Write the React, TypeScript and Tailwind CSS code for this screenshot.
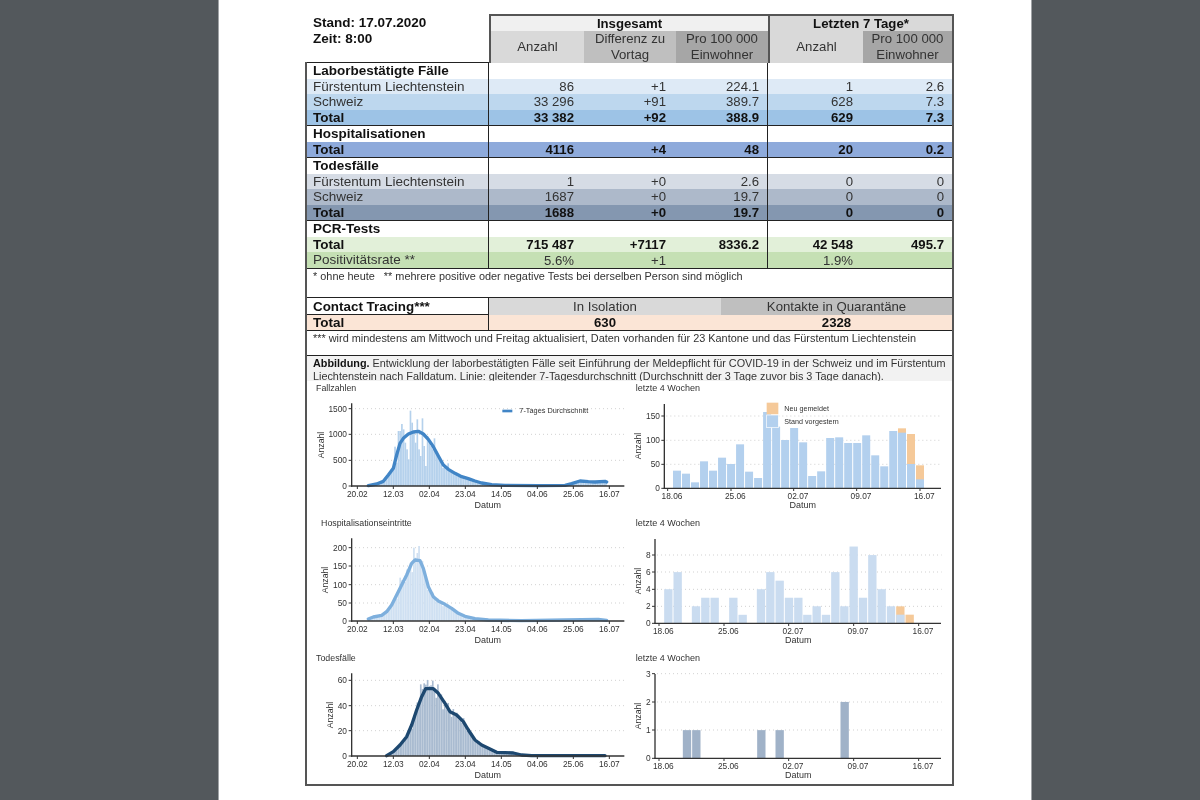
import type { ReactNode } from 'react';

const cols = 'grid grid-cols-[182px_93px_92px_94px_93px_91px]';

interface RowData {
  label: string;
  values: string[];
  bg: string;
  bold?: boolean;
}

const Row = ({ label, values, bg, bold }: RowData) => (
  <div className={`${cols} flex-1 items-center leading-none ${bg} ${bold ? 'font-bold text-[#111]' : 'text-[#333]'}`}>
    <div className="h-full flex items-center pl-[6px] text-[13.5px] border-r border-[#222]">{label}</div>
    {values.map((v, i) => (
      <div key={i} className={`h-full flex items-center justify-end pr-2 ${i === 2 ? 'border-r border-[#222]' : ''}`}>
        {v}
      </div>
    ))}
  </div>
);

const Heading = ({ label }: { label: string }) => (
  <div className={`${cols} flex-1 items-center leading-none font-bold text-[#111]`}>
    <div className="h-full flex items-center pl-[6px] text-[13.5px] border-r border-[#222]">{label}</div>
    <div />
    <div />
    <div className="h-full border-r border-[#222]" />
  </div>
);

const Group = ({ height, children }: { height: string; children: ReactNode }) => (
  <div className={`flex flex-col ${height} border-b border-[#222]`}>{children}</div>
);

type Pt = [number, number];

const interp = (line: Pt[], x: number) => {
  if (x < line[0][0] || x > line[line.length - 1][0]) return 0;
  for (let i = 1; i < line.length; i++) {
    if (x <= line[i][0]) {
      const [x0, y0] = line[i - 1];
      const [x1, y1] = line[i];
      return y0 + ((y1 - y0) * (x - x0)) / (x1 - x0);
    }
  }
  return 0;
};

const noise = [1.02, 0.9, 1.1, 0.96, 1.06, 0.84, 1.04, 0.93, 1.12];

interface HistProps {
  title: string;
  titleX: number;
  yLabelX: number;
  ticks: [string, number][];
  line: Pt[];
  peaks: Record<number, number>;
  bar: string;
  stroke: string;
  children?: ReactNode;
}

const histTicks = ['20.02', '12.03', '02.04', '23.04', '14.05', '04.06', '25.06', '16.07'];

const HistChart = ({ title, titleX, yLabelX, ticks, line, peaks, bar, stroke, children }: HistProps) => {
  const days = Array.from({ length: 147 }, (_, d) => d);
  return (
    <svg width={323} height={135} viewBox="6 3 969 405" className="block">
      <text x={titleX} y={33} fontSize={26.5} fill="#333">{title}</text>
      {ticks.map(([t, y]) => (
        <g key={t}>
          {t !== '0' && <line x1={150} x2={958} y1={y} y2={y} stroke="#c8c8c8" strokeWidth={2.5} strokeDasharray="3 9" />}
          <line x1={131} x2={140} y1={y} y2={y} stroke="#333" strokeWidth={3} />
          <text x={126} y={y + 9} fontSize={25} textAnchor="end" fill="#333">{t}</text>
        </g>
      ))}
      {days.map((d) => {
        const x = 157 + (108 / 21) * d;
        const base = 318 - interp(line, x);
        const h = peaks[d] ?? (line[0][0] <= x && x <= line[line.length - 1][0] ? base * noise[d % noise.length] : 0);
        return h > 0 ? <rect key={d} x={x - 2.5} y={318 - h} width={5} height={h} fill={bar} /> : null;
      })}
      <polyline points={line.map((p) => p.join(',')).join(' ')} fill="none" stroke={stroke} strokeWidth={10} strokeLinejoin="round" strokeLinecap="round" />
      <line x1={140} x2={140} y1={70} y2={320} stroke="#333" strokeWidth={4} />
      <line x1={138} x2={958} y1={318} y2={318} stroke="#333" strokeWidth={4} />
      {histTicks.map((t, i) => (
        <g key={t}>
          <line x1={157 + 108 * i} x2={157 + 108 * i} y1={318} y2={327} stroke="#333" strokeWidth={3} />
          <text x={157 + 108 * i} y={352} fontSize={25} textAnchor="middle" fill="#333">{t}</text>
        </g>
      ))}
      <text x={548} y={385} fontSize={27} textAnchor="middle" fill="#333">Datum</text>
      <text x={yLabelX} y={195} fontSize={26} textAnchor="middle" fill="#333" transform={`rotate(-90 ${yLabelX} 195)`} dy={8}>Anzahl</text>
      {children}
    </svg>
  );
};

interface BarItem {
  x: number;
  top: number;
  orange?: number;
}

interface BarProps {
  ticks: [string, number][];
  bars: BarItem[];
  tickX: number[];
  datumX: number;
  axisX: number;
  barWidth: number;
  fill: string;
  children?: ReactNode;
}

const barTicks = ['18.06', '25.06', '02.07', '09.07', '16.07'];

const BarChart = ({ ticks, bars, tickX, datumX, axisX, barWidth, fill, children }: BarProps) => (
  <svg width={323} height={135} viewBox="0 3 969 405" className="block">
    <text x={17} y={33} fontSize={27} fill="#333">letzte 4 Wochen</text>
    {ticks.map(([t, y]) => (
      <g key={t}>
        {t !== '0' && <line x1={axisX + 6} x2={935} y1={y} y2={y} stroke="#c8c8c8" strokeWidth={2.5} strokeDasharray="3 9" />}
        <line x1={axisX - 9} x2={axisX} y1={y} y2={y} stroke="#333" strokeWidth={3} />
        <text x={axisX - 13} y={y + 9} fontSize={25} textAnchor="end" fill="#333">{t}</text>
      </g>
    ))}
    {bars.map((b) => (
      <g key={b.x}>
        {b.orange !== undefined && <rect x={b.x - barWidth / 2} y={b.orange} width={barWidth} height={325 - b.orange} fill="#f5c999" />}
        <rect x={b.x - barWidth / 2} y={b.top} width={barWidth} height={325 - b.top} fill={fill} />
      </g>
    ))}
    <line x1={axisX} x2={axisX} y1={72} y2={327} stroke="#333" strokeWidth={4} />
    <line x1={axisX - 2} x2={933} y1={325} y2={325} stroke="#333" strokeWidth={4} />
    {barTicks.map((t, i) => (
      <g key={t}>
        <line x1={tickX[i]} x2={tickX[i]} y1={325} y2={333} stroke="#333" strokeWidth={3} />
        <text x={tickX[i] + 13} y={357} fontSize={25} textAnchor="middle" fill="#333">{t}</text>
      </g>
    ))}
    <text x={datumX} y={385} fontSize={27} textAnchor="middle" fill="#333">Datum</text>
    <text x={26} y={198} dy={8} fontSize={26} textAnchor="middle" fill="#333" transform="rotate(-90 26 198)">Anzahl</text>
    {children}
  </svg>
);

const line1: Pt[] = [[190,317],[215,312],[235,304],[250,285],[265,265],[275,225],[285,190],[295,175],[310,162],[325,156],[340,154],[355,162],[370,178],[385,200],[400,228],[415,255],[430,268],[450,280],[470,290],[490,296],[510,303],[530,309],[560,314],[600,316],[700,317],[780,316],[800,311],[825,303],[850,305],[870,306],[900,304],[905,306]];
const peaks1: Record<number, number> = { 21: 60, 22: 118, 23: 70, 24: 165, 25: 165, 26: 186, 27: 170, 28: 130, 29: 110, 30: 80, 31: 226, 32: 190, 33: 160, 34: 130, 35: 200, 36: 110, 37: 90, 38: 203, 39: 120, 40: 60, 41: 150, 42: 140, 43: 120, 44: 110, 45: 143, 46: 100, 47: 90, 53: 68 };

const line2: Pt[] = [[190,312],[205,306],[230,301],[245,290],[260,270],[275,240],[290,210],[305,180],[320,145],[330,135],[345,137],[355,160],[370,215],[385,245],[400,258],[420,268],[440,280],[460,295],[480,304],[510,311],[550,315],[650,317],[780,315],[880,313],[905,316]];
const peaks2: Record<number, number> = { 25: 130, 33: 220, 34: 190, 36: 225, 37: 170 };

const line3: Pt[] = [[245,317],[265,305],[285,285],[305,260],[320,225],[335,180],[350,140],[362,116],[385,116],[400,130],[420,160],[435,185],[455,195],[475,215],[490,240],[510,270],[530,285],[555,297],[575,307],[600,308],[625,309],[650,315],[680,317],[900,317]];
const peaks3: Record<number, number> = { 37: 215, 39: 218, 41: 228, 43: 212, 47: 215, 59: 110 };

const tops1 = [272,281,307,244,272,233,252,193,275,294,96,140,180,144,187,288,274,174,172,189,189,166,226,259,153];
const bars1: BarItem[] = [
  ...tops1.map((top, i) => ({ x: 141 + 27.03 * i, top })),
  { x: 816, top: 158, orange: 145 },
  { x: 843, top: 252, orange: 162 },
  { x: 870, top: 298, orange: 256 },
];

const vals2: [number, number][] = [[115,4],[143,6],[198,2],[226,3],[254,3],[310,3],[338,1],[393,4],[421,6],[449,5],[477,3],[505,3],[532,1],[560,2],[588,1],[616,6],[643,2],[671,9],[699,3],[727,8],[755,4],[783,2]];
const bars2: BarItem[] = [
  ...vals2.map(([x, v]) => ({ x, top: 325 - v * 25.6 })),
  { x: 811, top: 299, orange: 274 },
  { x: 839, top: 325, orange: 299 },
];

const bars3: BarItem[] = [[171,1],[199,1],[394,1],[449,1],[644,2]].map(([x, v]) => ({ x, top: 325 - v * 84.6 }));

const App = () => (
  <div className="h-[800px] overflow-hidden bg-[#53585c] pl-[218px] font-['Liberation_Sans',sans-serif] text-[13.2px] text-[#222]">
    <div className="w-[814px] h-full bg-white border-x border-[#a0a3a6] pt-[14px] pl-[86px] blur-[0.35px]">
      {/* Header */}
      <div className="grid grid-cols-[184px_465px] h-[48px]">
        <div className="pl-2 pt-[1px] font-bold text-[13.5px] leading-[16px] text-[#111]">
          <div>Stand: 17.07.2020</div>
          <div>Zeit: 8:00</div>
        </div>
        <div className="grid grid-cols-[93px_92px_94px_93px_1fr] grid-rows-[15px_1fr] border-2 border-b-0 border-[#555] text-center leading-[16px] text-[#333]">
          <div className="col-span-3 bg-[#f0f0f0] font-bold text-[#111] border-r-2 border-[#555]">Insgesamt</div>
          <div className="col-span-2 bg-[#d9d9d9] font-bold text-[#111]">Letzten 7 Tage*</div>
          <div className="bg-[#d9d9d9] flex items-center justify-center">Anzahl</div>
          <div className="bg-[#bfbfbf]">Differenz zu<br />Vortag</div>
          <div className="bg-[#a6a6a6] border-r-2 border-[#555]">Pro 100 000<br />Einwohner</div>
          <div className="bg-[#d9d9d9] flex items-center justify-center">Anzahl</div>
          <div className="bg-[#a6a6a6]">Pro 100 000<br />Einwohner</div>
        </div>
      </div>

      {/* Tabelle und Abbildung */}
      <div className="w-[649px] border-2 border-t-0 border-[#555]">
        <div className="border-t border-[#222]">
          <Group height="h-[63px]">
            <Heading label="Laborbestätigte Fälle" />
            <Row label="Fürstentum Liechtenstein" values={['86', '+1', '224.1', '1', '2.6']} bg="bg-[#deeaf6]" />
            <Row label="Schweiz" values={['33 296', '+91', '389.7', '628', '7.3']} bg="bg-[#bdd7ee]" />
            <Row label="Total" values={['33 382', '+92', '388.9', '629', '7.3']} bg="bg-[#9dc3e6]" bold />
          </Group>
          <Group height="h-[32px]">
            <Heading label="Hospitalisationen" />
            <Row label="Total" values={['4116', '+4', '48', '20', '0.2']} bg="bg-[#8eaadb]" bold />
          </Group>
          <Group height="h-[63px]">
            <Heading label="Todesfälle" />
            <Row label="Fürstentum Liechtenstein" values={['1', '+0', '2.6', '0', '0']} bg="bg-[#d6dce5]" />
            <Row label="Schweiz" values={['1687', '+0', '19.7', '0', '0']} bg="bg-[#adb9ca]" />
            <Row label="Total" values={['1688', '+0', '19.7', '0', '0']} bg="bg-[#8497b0]" bold />
          </Group>
          <Group height="h-[48px]">
            <Heading label="PCR-Tests" />
            <Row label="Total" values={['715 487', '+7117', '8336.2', '42 548', '495.7']} bg="bg-[#e2f0d9]" bold />
            <Row label="Positivitätsrate **" values={['5.6%', '+1', '', '1.9%', '']} bg="bg-[#c5e0b4]" />
          </Group>
        </div>

        <div className="h-[29px] border-b border-[#222] pl-[6px] text-[10.9px] leading-[14px] text-[#333] whitespace-pre">
          {'* ohne heute   ** mehrere positive oder negative Tests bei derselben Person sind möglich'}
        </div>

        {/* Contact Tracing */}
        <div className="grid grid-cols-[182px_232px_1fr] h-[17px] border-b border-[#222] items-center">
          <div className="h-full pl-[6px] font-bold text-[13.4px] leading-[17px] text-[#111] border-r border-[#222]">Contact Tracing***</div>
          <div className="h-full bg-[#d9d9d9] text-center leading-[17px] text-[#333]">In Isolation</div>
          <div className="h-full bg-[#bfbfbf] text-center leading-[17px] text-[#333]">Kontakte in Quarantäne</div>
        </div>
        <div className="grid grid-cols-[182px_232px_1fr] h-[16px] border-b border-[#222] bg-[#fbe5d6] font-bold text-[#111] leading-[16px]">
          <div className="pl-[6px] text-[13.5px] border-r border-[#222]">Total</div>
          <div className="text-center">630</div>
          <div className="text-center">2328</div>
        </div>
        <div className="h-[25px] border-b border-[#222] pl-[6px] text-[10.9px] leading-[14px] text-[#333]">
          *** wird mindestens am Mittwoch und Freitag aktualisiert, Daten vorhanden für 23 Kantone und das Fürstentum Liechtenstein
        </div>

        {/* Abbildung */}
        <div className="h-[25px] overflow-hidden bg-[#f2f2f2] pl-[6px] pt-[1px] text-[10.84px] leading-[13px] text-[#333]">
          <div><span className="font-bold text-[#111]">Abbildung.</span> Entwicklung der laborbestätigten Fälle seit Einführung der Meldepflicht für COVID-19 in der Schweiz und im Fürstentum</div>
          <div>Liechtenstein nach Falldatum. Linie: gleitender 7-Tagesdurchschnitt (Durchschnitt der 3 Tage zuvor bis 3 Tage danach).</div>
        </div>
        <div className="grid grid-cols-2 grid-rows-[135px_135px_133px] h-[403px]">
          <HistChart title="Fallzahlen" titleX={33} yLabelX={48} ticks={[['1500', 86], ['1000', 163], ['500', 241], ['0', 318]]} line={line1} peaks={peaks1} bar="#b5d1ec" stroke="#4185c6">
            <line x1={592} x2={622} y1={93} y2={93} stroke="#4185c6" strokeWidth={8} />
            <text x={643} y={100} fontSize={22} fill="#333">7-Tages Durchschnitt</text>
          </HistChart>
          <BarChart ticks={[['150', 108], ['100', 181], ['50', 253], ['0', 325]]} bars={bars1} tickX={[113, 303, 491, 680, 870]} datumX={518} axisX={103} barWidth={24} fill="#b3d0ee">
            <rect x={410} y={68} width={35} height={35} fill="#f5c999" />
            <rect x={410} y={105} width={35} height={38} fill="#b3d0ee" stroke="#fff" strokeWidth={2} />
            <text x={463} y={94} fontSize={21.5} fill="#333">Neu gemeldet</text>
            <text x={463} y={132} fontSize={21.5} fill="#333">Stand vorgestern</text>
          </BarChart>
          <HistChart title="Hospitalisationseintritte" titleX={48} yLabelX={62} ticks={[['200', 98], ['150', 153], ['100', 209], ['50', 264], ['0', 318]]} line={line2} peaks={peaks2} bar="#cfe0f2" stroke="#7dafdd" />
          <BarChart ticks={[['8', 120], ['6', 171], ['4', 223], ['2', 274], ['0', 325]]} bars={bars2} tickX={[87, 282, 476, 671, 866]} datumX={505} axisX={75} barWidth={25} fill="#cadcf0" />
          <HistChart title="Todesfälle" titleX={33} yLabelX={75} ticks={[['60', 91], ['40', 167], ['20', 242], ['0', 318]]} line={line3} peaks={peaks3} bar="#a9bbd0" stroke="#1d4870" />
          <BarChart ticks={[['3', 71], ['2', 156], ['1', 240], ['0', 325]]} bars={bars3} tickX={[87, 282, 476, 671, 866]} datumX={505} axisX={75} barWidth={25} fill="#a0b2c8" />
        </div>
      </div>
    </div>
  </div>
);

export default App;
